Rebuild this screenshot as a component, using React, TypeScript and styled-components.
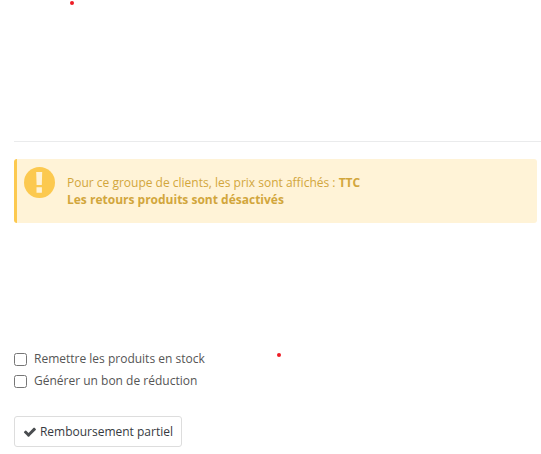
import React, { useState } from 'react';
import styled, { createGlobalStyle } from 'styled-components';

type OptionProps = {
  label: string;
};

const RefundOption = ({ label }: OptionProps) => {
  const [isChecked, setIsChecked] = useState(false);

  return (
    <OptionLabel>
      <Checkbox type="checkbox" checked={isChecked} onChange={() => setIsChecked(!isChecked)} />
      {label}
    </OptionLabel>
  );
};

const App = () => {
  return (
    <>
      <GlobalStyle />
      <Panel>
        <TopRow>
          <Dot />
        </TopRow>
        <Divider />
        <Alert>
          <AlertIcon>
            <svg width="31" height="31" viewBox="0 0 31 31">
              <circle cx="15.5" cy="15.5" r="15.5" fill="#fcc94f" />
              <path d="M12.2 5h6l-.4 13h-5.2zM12.5 20.2h5.4v5.6h-5.4z" fill="#fff3d7" />
            </svg>
          </AlertIcon>
          <AlertText>
            Pour ce groupe de clients, les prix sont affichés : <strong>TTC</strong>
            <br />
            <strong>Les retours produits sont désactivés</strong>
          </AlertText>
        </Alert>
        <Options>
          <div>
            <RefundOption label="Remettre les produits en stock" />
            <RefundOption label="Générer un bon de réduction" />
          </div>
          <Dot />
        </Options>
        <RefundButton type="button">
          <svg width="14" height="14" viewBox="0 0 1792 1792">
            <path
              fill="#4a4d50"
              d="M1671 566q0 40-28 68l-724 724-136 136q-28 28-68 28t-68-28l-136-136-362-362q-28-28-28-68t28-68l136-136q28-28 68-28t68 28l294 295 656-657q28-28 68-28t68 28l136 136q28 28 28 68z"
            />
          </svg>
          Remboursement partiel
        </RefundButton>
      </Panel>
    </>
  );
};

const GlobalStyle = createGlobalStyle`
  * {
    box-sizing: border-box;
  }

  body {
    margin: 0;
    background: #ffffff;
    color: #555555;
    font-family: 'Open Sans', sans-serif;
    font-size: 12px;
    line-height: 17px;
    overflow: hidden;
  }
`;

const Panel = styled.div`
  height: 454px;
  padding-left: 14px;
`;

const TopRow = styled.div`
  height: 141px;
  padding: 1px 0 0 56px;
`;

const Dot = styled.div`
  width: 4px;
  height: 4px;
  border-radius: 50%;
  background: #ee1c25;
`;

const Divider = styled.hr`
  height: 1px;
  margin: 0 0 17px;
  border: none;
  background: #eaebec;
`;

const Alert = styled.div`
  display: flex;
  width: 523px;
  height: 64px;
  padding: 8px 7px;
  border-left: 3px solid #fcc94f;
  border-radius: 3px;
  background: #fff3d7;
  color: #d2a63c;
`;

const AlertIcon = styled.div`
  width: 43px;
  flex-shrink: 0;
`;

const AlertText = styled.div`
  padding-top: 7px;
`;

const Options = styled.div`
  display: flex;
  justify-content: space-between;
  width: 267px;
  margin-top: 124px;

  > ${Dot} {
    margin-top: 6px;
  }
`;

const OptionLabel = styled.label`
  display: flex;
  align-items: center;
  height: 22px;
`;

const Checkbox = styled.input`
  width: 13px;
  height: 13px;
  margin: 2px 7px 0 0;
`;

const RefundButton = styled.button`
  display: flex;
  align-items: center;
  gap: 3px;
  width: 168px;
  height: 31px;
  margin-top: 25px;
  padding: 0 8px;
  border: 1px solid #dddddd;
  border-radius: 3px;
  background: #ffffff;
  color: #363a41;
  font: inherit;
  white-space: nowrap;
`;

export default App;
